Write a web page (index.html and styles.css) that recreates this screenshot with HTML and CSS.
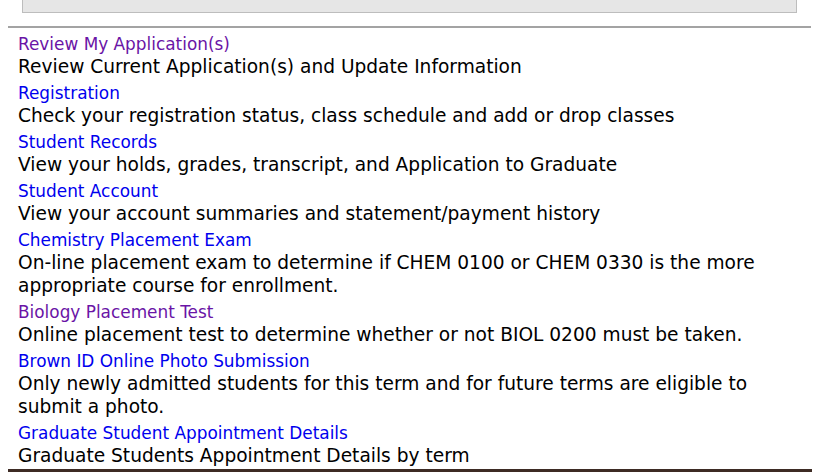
FILE: index.html
```html
<!DOCTYPE html>
<html>
<head>
<meta charset="utf-8">
<link rel="stylesheet" href="styles.css">
</head>
<body>
<div class="page">
  <div class="topbox"></div>
  <div class="rule"></div>
  <ul class="menu">
    <li><a class="visited" href="#">Review My Application(s)</a><p>Review Current Application(s) and Update Information</p></li>
    <li><a href="#">Registration</a><p>Check your registration status, class schedule and add or drop classes</p></li>
    <li><a href="#">Student Records</a><p>View your holds, grades, transcript, and Application to Graduate</p></li>
    <li><a href="#">Student Account</a><p>View your account summaries and statement/payment history</p></li>
    <li><a href="#">Chemistry Placement Exam</a><p>On-line placement exam to determine if CHEM 0100 or CHEM 0330 is the more appropriate course for enrollment.</p></li>
    <li><a class="visited" href="#">Biology Placement Test</a><p>Online placement test to determine whether or not BIOL 0200 must be taken.</p></li>
    <li><a href="#">Brown ID Online Photo Submission</a><p>Only newly admitted students for this term and for future terms are eligible to submit a photo.</p></li>
    <li><a href="#">Graduate Student Appointment Details</a><p>Graduate Students Appointment Details by term</p></li>
  </ul>
  <div class="bottomrule"></div>
</div>
</body>
</html>
```
FILE: styles.css
```css
html, body {
  margin: 0;
  padding: 0;
  background: #fff;
}
.page {
  width: 828px;
  font-family: "DejaVu Sans", Verdana, sans-serif;
}
.topbox {
  margin-left: 22px;
  width: 773px;
  height: 12px;
  background: #e6e6e6;
  border: 1px solid #bdbdbd;
  border-top: none;
}
.rule {
  margin: 13px 0 0 8px;
  width: 803px;
  height: 2px;
  background: #a3a3a3;
}
.menu {
  list-style: none;
  margin: 5px 0 0 0;
  padding: 0 0 0 18px;
  width: 760px;
}
.menu li {
  margin: 0 0 4px 0;
}
.menu li:last-child {
  margin-bottom: 0;
}
.menu a {
  display: block;
  color: #0000ee;
  text-decoration: none;
  font-size: 16.9px;
  line-height: 22px;
}
.menu a.visited {
  color: #6a14a6;
}
.menu p {
  margin: 0;
  color: #000;
  font-size: 18.6px;
  line-height: 23px;
}
.bottomrule {
  margin: 2px 0 0 8px;
  width: 804px;
  height: 3px;
  background: #3d2b24;
}
```
